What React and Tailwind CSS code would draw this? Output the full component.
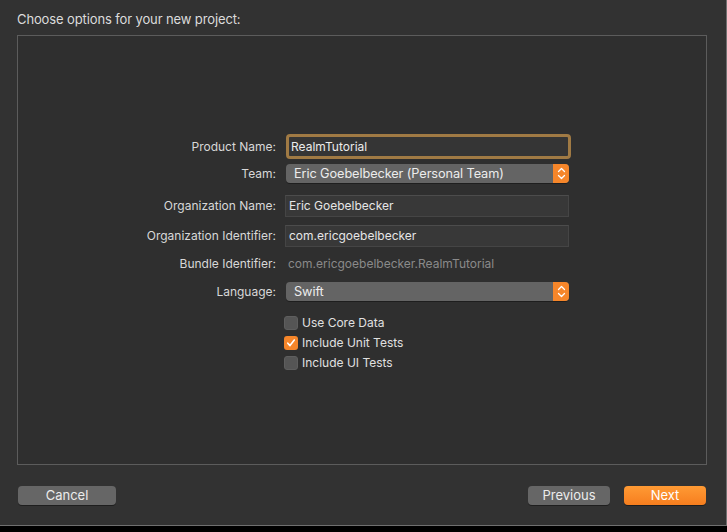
import React from "react";

function Stepper() {
  return (
    <div className="w-[16px] h-full bg-[#f6862a] rounded-r-[4px] flex items-center justify-center">
      <svg width="9" height="13" viewBox="0 0 9 13" fill="none" stroke="#fff" strokeWidth="1.3" strokeLinecap="round" strokeLinejoin="round">
        <path d="M1.5 4.5 L4.5 1.5 L7.5 4.5" />
        <path d="M1.5 8.5 L4.5 11.5 L7.5 8.5" />
      </svg>
    </div>
  );
}

function Popup({ text }) {
  return (
    <div className="ml-[1px] w-[283px] h-[19px] flex rounded-[4px] bg-[#646464] shadow-[0_1px_0_rgba(0,0,0,0.35)]">
      <div className="flex-1 pl-[8px] flex items-center text-[12.75px] tracking-[-0.1px] text-[#ececec]">{text}</div>
      <Stepper />
    </div>
  );
}

function Field({ text }) {
  return (
    <div className="w-[284px] h-[22px] bg-[#383838] border border-[#454545] border-t-[#4c4c4c] flex items-center pl-[3px] text-[12px] text-[#e6e6e6]">
      {text}
    </div>
  );
}

function Label({ children }) {
  return (
    <div className="w-[258px] mr-[9px] text-right text-[12px] text-[#d8d8d8]">{children}</div>
  );
}

function Check({ checked, label }) {
  return (
    <div className="h-[20px] flex items-center">
      <div
        className={
          checked
            ? "w-[14px] h-[14px] rounded-[3px] bg-[#f6862a] flex items-center justify-center"
            : "w-[14px] h-[14px] rounded-[3px] bg-[#555555] border border-[#5e5e5e]"
        }
      >
        {checked && (
          <svg width="10" height="10" viewBox="0 0 10 10" fill="none" stroke="#fff" strokeWidth="1.6" strokeLinecap="round" strokeLinejoin="round">
            <path d="M1.8 5.2 L4 7.6 L8.3 2" />
          </svg>
        )}
      </div>
      <span className="ml-[4px] text-[12px] text-[#e0e0e0]">{label}</span>
    </div>
  );
}

export default function App() {
  return (
    <div className="w-[727px] h-[532px] bg-black" style={{ fontFamily: "Inter, 'Noto Sans', sans-serif" }}>
      <div className="w-[727px] h-[526px] bg-[#323232] border-r border-b border-[#707070] flex flex-col">
        <div className="pl-[17px] pt-[11px] h-[35px] text-[13px] leading-[16px] tracking-[-0.12px] text-[#dcdcdc]">
          Choose options for your new project:
        </div>
        <div className="ml-[17px] w-[690px] h-[430px] border border-[#5c5c5c] bg-[#2f2f2f] flex flex-col pt-[98px]">
          <div className="flex items-center h-[25px]">
            <Label>Product Name:</Label>
            <div className="ml-[4px] w-[279px] h-[19px] bg-[#353535] outline-[3px] outline-solid outline-[#a07a44] rounded-[1px] flex items-center pl-[2px] text-[12px] text-[#ececec]">
              RealmTutorial
            </div>
          </div>
          <div className="flex items-center mt-[5px]">
            <Label>Team:</Label>
            <Popup text="Eric Goebelbecker (Personal Team)" />
          </div>
          <div className="flex items-center mt-[12px]">
            <Label>Organization Name:</Label>
            <Field text="Eric Goebelbecker" />
          </div>
          <div className="flex items-center mt-[8px]">
            <Label>Organization Identifier:</Label>
            <Field text="com.ericgoebelbecker" />
          </div>
          <div className="flex items-center mt-[9px] h-[16px]">
            <Label>Bundle Identifier:</Label>
            <div className="pl-[3px] text-[12px] text-[#8a8a8a]">com.ericgoebelbecker.RealmTutorial</div>
          </div>
          <div className="flex items-center mt-[10px]">
            <Label>Language:</Label>
            <Popup text="Swift" />
          </div>
          <div className="flex flex-col mt-[12px] pl-[266px]">
            <Check label="Use Core Data" />
            <Check checked label="Include Unit Tests" />
            <Check label="Include UI Tests" />
          </div>
        </div>
        <div className="flex items-center mt-[21px] pl-[18px] pr-[20px]">
          <button className="w-[98px] h-[19px] rounded-[4px] bg-[#666666] text-[13px] text-[#ececec] shadow-[0_1px_0_rgba(0,0,0,0.4)]">
            Cancel
          </button>
          <div className="flex-1" />
          <button className="w-[82px] h-[19px] rounded-[4px] bg-[#666666] text-[13px] text-[#ececec] shadow-[0_1px_0_rgba(0,0,0,0.4)]">
            Previous
          </button>
          <button className="ml-[14px] w-[82px] h-[19px] rounded-[4px] bg-gradient-to-b from-[#ff9a34] to-[#f67e1e] text-[13px] text-white shadow-[0_1px_0_rgba(0,0,0,0.4)]">
            Next
          </button>
        </div>
      </div>
    </div>
  );
}
